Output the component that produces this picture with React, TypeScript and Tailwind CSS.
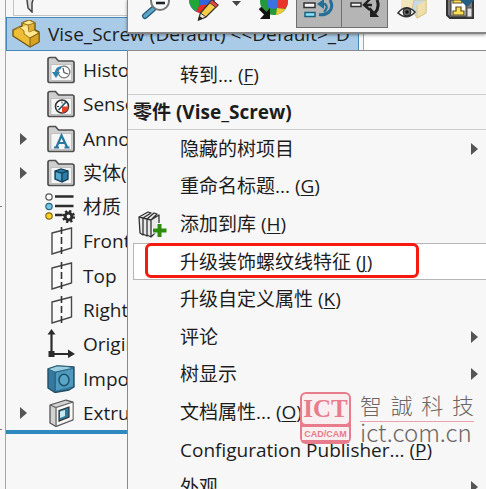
import type { ReactNode } from "react"

interface TreeItem {
  label: string
  icon: ReactNode
  expandable?: boolean
}

interface MenuEntry {
  label: string
  hotkey?: string
  icon?: ReactNode
  submenu?: boolean
  active?: boolean
}

function Folder({ children }: { children: ReactNode }) {
  return (
    <svg viewBox="0 0 28 28" className="size-7">
      <path d="M1 25V3.500Q1 1.500 3 1.500H8.500L11.500 5H25Q27 5 27 7V25Q27 26.500 25 26.500H3Q1 26.500 1 25Z" fill="#cfcfcf" stroke="#505050" strokeWidth="1.700" />
      <path d="M4 8.500H24.500V24.500H4Z" fill="#f4f5f6" stroke="#aaa" strokeWidth=".6" />
      {children}
    </svg>
  )
}

function PartIcon() {
  return (
    <svg viewBox="0 0 28 28" className="size-7">
      <path d="M1 10L10 6V3L17 0L23 3V10L27 12V22L18 27L1 16Z" fill="#efbd35" stroke="#6f5616" strokeWidth="1.400" strokeLinejoin="round" />
      <path d="M1 10L7 7L12 11V14L18 18L27 13L22 10L17 12L16 5L10 3L17 0L23 3L16 5" fill="#ffe88d" stroke="#967420" strokeLinejoin="round" />
      <path d="M18 18V27L27 22V13Z" fill="#d8a322" stroke="#7f6117" />
      <path d="M17 6L22 4V10L17 12Z" fill="#e0ae2b" />
    </svg>
  )
}

function HistoryIcon() {
  return (
    <Folder>
      <circle cx="17" cy="16" r="5.800" fill="#fff" stroke="#777" strokeWidth="1.300" />
      <path d="M16 12L17 16.500L21 18" fill="none" stroke="#555" strokeWidth="1.200" />
      <path d="M14 11.500Q9 12 9 18" fill="none" stroke="#2d83ad" strokeWidth="2.500" />
      <path d="M5 16H13L9 22Z" fill="#2d83ad" />
    </Folder>
  )
}

function SensorIcon() {
  return (
    <Folder>
      <circle cx="15" cy="16.500" r="6.500" fill="#fff" stroke="#333" strokeWidth="1.600" />
      <path d="M15 16.500H21.500A6.500 6.500 0 0 1 15 23Z" fill="#e64227" />
      <path d="M11.500 20L19 12" stroke="#2a5878" strokeWidth="1.800" />
      <path d="M10 16.500H12M15 11.500V13.500" stroke="#333" />
    </Folder>
  )
}

function AnnotationIcon() {
  return (
    <Folder>
      <path d="M9.500 22L14.500 10.500L20 22M11.500 18H18M7 22.500H12M17.500 22.500H22.500" fill="none" stroke="#27789f" strokeWidth="2.200" />
    </Folder>
  )
}

function SolidIcon() {
  return (
    <Folder>
      <path d="M8 12L14 10L21 12V20L15 23L8 20Z" fill="#2c7ca5" stroke="#123e56" strokeWidth="1.300" />
      <path d="M8 12L15 14L21 12M15 14V23" fill="none" stroke="#123e56" strokeWidth="1.200" />
      <path d="M9 13.500L14 15V21.500L9 19.500Z" fill="#56a8cf" />
    </Folder>
  )
}

function MaterialIcon() {
  return (
    <svg viewBox="0 0 28 30" className="h-[30px] w-7 overflow-visible">
      <path d="M8 4.500H26.500M8 14H26.500M8 23H15" stroke="#2b2b2b" strokeWidth="2.600" />
      <circle cx="2" cy="5" r="3.200" fill="#fff" stroke="#555" strokeWidth="1.200" />
      <circle cx="2" cy="14.500" r="3.200" fill="#73c6e8" stroke="#2d6680" strokeWidth="1.200" />
      <circle cx="2" cy="24" r="3.200" fill="#ffd21e" stroke="#85691a" strokeWidth="1.200" />
      <circle cx="21.500" cy="24.500" r="5.300" fill="none" stroke="#2b2b2b" strokeWidth="2.500" strokeDasharray="2.200 1.960" />
      <circle cx="21.500" cy="24.500" r="3.400" fill="none" stroke="#2b2b2b" strokeWidth="3" />
    </svg>
  )
}

function PlaneIcon() {
  return (
    <svg viewBox="0 0 28 28" className="size-7 overflow-visible">
      <path d="M5 6L24.500 1V21L5 27Z" fill="#fafafa" stroke="#484848" strokeWidth="1.400" />
      <path d="M14.500 0V28" stroke="#333" strokeWidth="1.600" strokeDasharray="7 3" />
    </svg>
  )
}

function OriginIcon() {
  return (
    <svg viewBox="0 0 28 28" className="size-7 overflow-visible">
      <path d="M4.500 25V3M4.500 24H23" stroke="#2b2b2b" strokeWidth="2.200" />
      <path d="M0.500 4.500L4.500 -1L8.500 4.500ZM21 19.500L28 24L21 28Z" fill="#2b2b2b" />
      <rect x="1.500" y="21" width="6" height="6" fill="#2b2b2b" />
    </svg>
  )
}

function ImportedIcon() {
  return (
    <svg viewBox="0 0 28 28" className="size-7">
      <path d="M1 4L10 1L27 2V22L22 25L8 27.500L1 23Z" fill="#3579a0" stroke="#244d62" strokeWidth="1.400" strokeLinejoin="round" />
      <path d="M1 4L8 7L27 3L20 1.500L10 1Z" fill="#9bd0e3" stroke="#285e78" strokeWidth=".8" />
      <path d="M8 7V27" stroke="#285e78" />
      <path d="M9 8L26 4V21L9 25.500Z" fill="#4f9bbf" />
      <ellipse cx="17" cy="15" rx="5" ry="5.800" fill="#5aa5c8" stroke="#1e526b" strokeWidth="1.500" />
    </svg>
  )
}

function ExtrudeIcon() {
  return (
    <svg viewBox="0 0 28 28" className="size-7">
      <path d="M3 6L19 1L26 3V21L9 27.500L3 24Z" fill="#d2d2d2" stroke="#555" strokeWidth="1.300" strokeLinejoin="round" />
      <path d="M3 6L9 8.500L26 3M9 8.500V27" fill="none" stroke="#666" strokeWidth="1.200" />
      <path d="M10 9L25.500 4V20L10 26Z" fill="#f8f8f8" />
      <path d="M12 11.500L22 8V18L12 22Z" fill="#297a9f" stroke="#333" strokeWidth="1.200" />
      <path d="M13 12.500L18 11V17L13 19Z" fill="#c9e9f2" />
    </svg>
  )
}

function LibraryIcon() {
  return (
    <svg viewBox="0 0 30 28" className="h-7 w-[30px]">
      <path d="M1 7L13 1L21 4V19L9 27L2 24Z" fill="#e8e8e8" />
      <path d="M1 7L5 8V25L2 23ZM5 8L9 9V26L5 24M9 9L13 10V27L9 25M1 7L10 2L13 3L5 8M9 9L16 3L19 4L13 10M13 10L21 5V19L13 27" fill="none" stroke="#333" strokeWidth="1.300" strokeLinejoin="round" />
      <path d="M21.500 13V28M14 20.500H29" stroke="#f7f7f7" strokeWidth="6" />
      <path d="M21.500 14V27M15 20.500H28.500" stroke="#2d8c0d" strokeWidth="4" />
    </svg>
  )
}

const treeItems: TreeItem[] = [
  { label: "History", icon: <HistoryIcon /> },
  { label: "Sensors", icon: <SensorIcon /> },
  { label: "Annotations", icon: <AnnotationIcon />, expandable: true },
  { label: "实体(1)", icon: <SolidIcon />, expandable: true },
  { label: "材质", icon: <MaterialIcon /> },
  { label: "Front", icon: <PlaneIcon /> },
  { label: "Top", icon: <PlaneIcon /> },
  { label: "Right", icon: <PlaneIcon /> },
  { label: "Origin", icon: <OriginIcon /> },
  { label: "Imported1", icon: <ImportedIcon /> },
  { label: "Extrude1", icon: <ExtrudeIcon />, expandable: true },
]

const menuEntries: MenuEntry[] = [
  { label: "隐藏的树项目", submenu: true },
  { label: "重命名标题...", hotkey: "G" },
  { label: "添加到库", hotkey: "H", icon: <LibraryIcon /> },
  { label: "升级装饰螺纹线特征", hotkey: "J", active: true },
  { label: "升级自定义属性", hotkey: "K" },
  { label: "评论", submenu: true },
  { label: "树显示", submenu: true },
  { label: "文档属性...", hotkey: "O" },
  { label: "Configuration Publisher...", hotkey: "P" },
  { label: "外观", submenu: true },
]

function Triangle() {
  return (
    <svg viewBox="0 0 7 12" className="h-3 w-[7px] shrink-0">
      <path d="M0 0L7 6L0 12Z" fill="#555" />
    </svg>
  )
}

function MenuLabel({ label, hotkey }: { label: string; hotkey?: string }) {
  return (
    <span className="whitespace-pre">
      {label}
      {hotkey && (
        <>
          {" ("}
          <span className="underline decoration-1 underline-offset-2">{hotkey}</span>)
        </>
      )}
    </span>
  )
}

function FeatureTree() {
  return (
    <aside className="flex w-[359px] shrink-0 flex-col border-x border-[#a5a5a5] bg-[#f7f7f7]">
      <div className="ml-[7px] flex h-4 border-b border-l border-[#c4c4c4] pl-3">
        <svg viewBox="0 0 12 13" className="h-[13px] w-3">
          <path d="M1 0L2 8L6 12V3L7 0" fill="#ddd" stroke="#444" strokeWidth="1.500" />
        </svg>
      </div>
      <button className="mt-px mr-1 flex h-[34px] items-center gap-2 overflow-hidden border border-[#4289b8] bg-[#a9cbe7] pl-[5px] text-left whitespace-nowrap">
        <span className="shrink-0">
          <PartIcon />
        </span>
        Vise_Screw (Default) &lt;&lt;Default&gt;_D
      </button>
      <ul className="mt-[2px] flex h-[377px] flex-col">
        {treeItems.map((item) => (
          <li key={item.label} className="flex flex-1 items-center pl-[14px]">
            <span className="flex w-[27px] shrink-0">{item.expandable && <Triangle />}</span>
            <span className="w-9 shrink-0">{item.icon}</span>
            <span className="whitespace-nowrap">{item.label}</span>
          </li>
        ))}
      </ul>
      <div className="h-1 shrink-0 bg-[#2e89c0]" />
    </aside>
  )
}

function Toolbar() {
  return (
    <div
      role="toolbar"
      aria-label="View"
      className="absolute top-0 right-0 left-[127px] flex h-[34px] items-start overflow-hidden border-b-2 border-l border-[#858585] bg-[#f7f7f7] pl-3 shadow-[0_1px_3px_rgba(0,0,0,0.4)]"
    >
      <button aria-label="Zoom out" className="mr-4 shrink-0">
        <svg viewBox="0 0 32 28" className="h-7 w-8">
          <path d="M13 9L5 16" stroke="#245b77" strokeWidth="6" strokeLinecap="round" />
          <path d="M13 9L5 16" stroke="#5ba5c8" strokeWidth="3.500" strokeLinecap="round" />
          <circle cx="20" cy="1" r="9" fill="#f8fbfd" stroke="#777" strokeWidth="2" />
          <path d="M16 3H25" stroke="#222" strokeWidth="2.600" />
        </svg>
      </button>
      <button aria-label="Edit appearance" className="shrink-0">
        <svg viewBox="0 0 32 28" className="h-7 w-8">
          <circle cx="14" cy="0" r="13" fill="#2f66dd" />
          <path d="M1 0H11V6L8 11.500Q2 8 1 0Z" fill="#23a638" />
          <path d="M8 11.500L11 6Q15 4 20 5L14 13Q10 13 8 11.500Z" fill="#e52c25" />
          <path d="M10.500 20L12.500 13L24 0L30 5L18 17Z" fill="#f8cf4b" stroke="#3c3425" strokeWidth="1.300" />
          <path d="M24 0L30 5L28 7.500L21.500 2.500Z" fill="#e04a48" stroke="#5c3030" />
          <path d="M10.500 20L12.500 13L18 17Z" fill="#f7e5c5" stroke="#333" />
          <path d="M10 20.500L11.500 16L15 18.500Z" fill="#222" />
        </svg>
      </button>
      <button aria-label="Appearance options" className="flex h-[6px] w-9 shrink-0 items-end justify-center pr-1">
        <svg viewBox="0 0 9 5" className="h-[5px] w-[9px]">
          <path d="M0 0H9L4.500 5Z" fill="#444" />
        </svg>
      </button>
      <button aria-label="Apply scene" className="mr-2 shrink-0">
        <svg viewBox="0 0 32 28" className="h-7 w-8">
          <circle cx="18" cy="1" r="14" fill="#25993a" />
          <path d="M11 0H22L21 8Q16 10 12 7Z" fill="#3a72e6" />
          <path d="M22 0H32Q32 6 29 9L21 8Z" fill="#e7352b" />
          <path d="M21 8L29 9Q26 14 20 15Z" fill="#efc92e" />
          <path d="M4 8L12 16" stroke="#111" strokeWidth="3.500" />
          <path d="M14 8V19H4Z" fill="#111" />
        </svg>
      </button>
      <button aria-label="Roll back" className="h-[28px] w-[46px] shrink-0 border border-t-0 border-[#707070] bg-[#b5b5b5]">
        <svg viewBox="0 0 44 27" className="h-[27px] w-11">
          <rect x="7" y="3" width="11" height="4.500" fill="#f6f6f6" stroke="#333" strokeWidth="1.500" />
          <rect x="8" y="12.500" width="10" height="4" fill="#8be3fa" stroke="#17617c" strokeWidth="1.500" />
          <path d="M33 0Q37 7 32 12Q28 15.500 22 14.500" fill="none" stroke="#256f97" strokeWidth="3" />
          <path d="M22 4H28Q32 7 27 12" fill="none" stroke="#256f97" strokeWidth="2.200" />
          <path d="M20 4L27 -1V9Z" fill="#256f97" />
        </svg>
      </button>
      <button aria-label="Roll forward" className="h-[28px] w-[46px] shrink-0 border border-t-0 border-l-0 border-[#707070] bg-[#b5b5b5]">
        <svg viewBox="0 0 44 27" className="h-[27px] w-11">
          <rect x="9" y="3" width="10" height="3.500" fill="#f6f6f6" stroke="#333" strokeWidth="1.500" />
          <path d="M22 5H30M28 -1L22 5L28 10" fill="none" stroke="#202020" strokeWidth="2.400" />
          <path d="M35 0Q38 7 33 13" fill="none" stroke="#202020" strokeWidth="3" />
          <path d="M28 7L37 17H28Z" fill="#202020" />
        </svg>
      </button>
      <button aria-label="Hide or show" className="mr-4 ml-[9px] shrink-0">
        <svg viewBox="0 0 32 28" className="h-7 w-8">
          <path d="M4 0L17 0V10L9 13L4 8Z" fill="#f2e5bd" />
          <path d="M17 0H29V13L20 18L15 10Z" fill="#c6dbea" stroke="#d6c48a" />
          <path d="M20 5V18L29 13V0" fill="#f0dfae" stroke="#dac681" />
          <path d="M1 13Q9 3 18 12Q10 21 1 13Z" fill="#fff" stroke="#333" strokeWidth="1.600" />
          <circle cx="10" cy="12" r="4" fill="#666" stroke="#222" />
          <circle cx="10" cy="12" r="1.800" fill="#111" />
        </svg>
      </button>
      <button aria-label="Save view" className="shrink-0">
        <svg viewBox="0 0 32 28" className="h-7 w-8">
          <path d="M2 0V15L5 18H28V0" fill="#777" stroke="#333" strokeWidth="2" />
          <path d="M6 0H21V16H6Z" fill="#fff" stroke="#333" />
          <path d="M8 0H17V3H8ZM11 7H16V11H19V15H8V11H11Z" fill="#ffdf55" stroke="#5b4b1e" strokeWidth="1.200" />
          <path d="M22 8H27V17H22Z" fill="#e2e2e2" stroke="#555" />
          <path d="M14 -1H30L22 7Z" fill="#245d82" />
        </svg>
      </button>
    </div>
  )
}

function ContextMenu() {
  return (
    <div role="menu" className="absolute top-[50px] right-0 left-[127px] border-t border-l border-[#8a8a8a] bg-[#f7f7f7]">
      <button role="menuitem" className="flex h-[43px] w-full items-center pt-1 pl-[52px]">
        <MenuLabel label="转到..." hotkey="F" />
      </button>
      <h2 className="flex h-9 items-center border-y border-[#cdcdcd] pl-[5px] font-bold">零件 (Vise_Screw)</h2>
      <div className="flex h-[376px] flex-col">
        {menuEntries.map((entry) => (
          <button key={entry.label} role="menuitem" className="relative flex min-h-0 w-full flex-1 items-center pr-2">
            {entry.active && (
              <>
                <span className="absolute inset-y-0 right-0 left-[5px] border-y border-l border-[#b5b5b5] bg-white" />
                <span className="absolute top-0 bottom-[2px] left-[17px] w-[274px] rounded-md border-[3px] border-[#f5190f]" />
              </>
            )}
            <span className="flex w-[52px] shrink-0 pl-[10px]">{entry.icon}</span>
            <span className="relative flex-1 text-left">
              <MenuLabel label={entry.label} hotkey={entry.hotkey} />
            </span>
            {entry.submenu && <Triangle />}
          </button>
        ))}
      </div>
    </div>
  )
}

function Watermark() {
  return (
    <div className="pointer-events-none absolute top-[392px] left-[300px] flex gap-[9px]">
      <div className="flex h-[52px] w-[51px] flex-col rounded-md bg-[#e67c8c] px-[2px] pt-[2px]">
        <span className="flex h-[30px] items-center justify-center rounded bg-[#f9eff0] font-['Liberation_Serif',serif] text-[25px] font-bold text-[#e67c8c]">
          ICT
        </span>
        <span className="mt-[3px] flex h-[13px] items-center justify-center bg-[#f9eff0] font-['Liberation_Sans',sans-serif] text-[9px] font-bold text-[#e67c8c]">
          CAD/CAM
        </span>
      </div>
      <div className="w-[114px] text-[#6c6665]">
        <div className="flex h-[30px] items-start justify-between border-b border-[#e9a2ad] font-['Noto_Sans_CJK_TC',sans-serif] text-[22px] leading-6 font-light">
          <span>智</span>
          <span>誠</span>
          <span>科</span>
          <span>技</span>
        </div>
        <div className="font-['Noto_Sans_CJK_SC',sans-serif] text-[24px] leading-5 font-light">ict.com.cn</div>
      </div>
    </div>
  )
}

export default function App() {
  return (
    <main className="relative flex h-screen overflow-hidden bg-white font-['Open_Sans','Noto_Sans_CJK_SC',sans-serif] text-[19px] leading-6 text-[#1d1d1d]">
      <div className="flex w-[5px] shrink-0 flex-col bg-[#f7f7f7]">
        <span className="mt-[206px] h-px w-[2px] bg-[#777]" />
        <span className="mt-[222px] h-px w-[2px] bg-[#777]" />
      </div>
      <FeatureTree />
      <ContextMenu />
      <Toolbar />
      <Watermark />
    </main>
  )
}
